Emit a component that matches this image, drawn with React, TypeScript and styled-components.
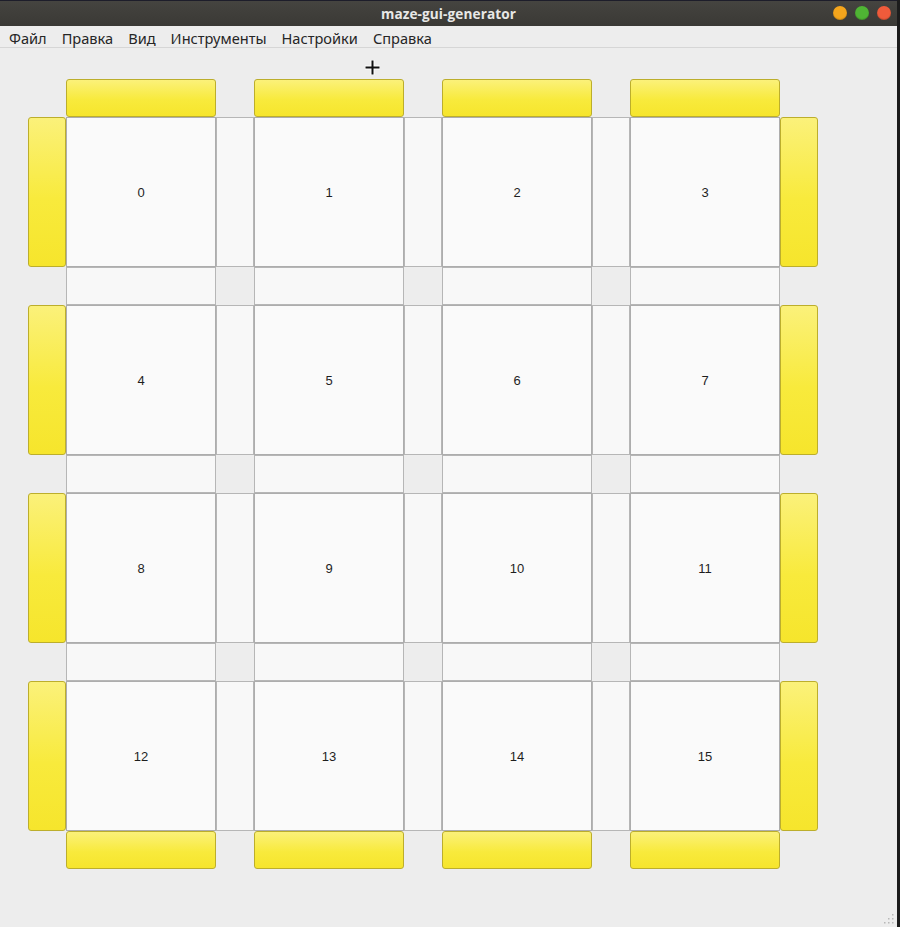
import React from "react";
import styled, { createGlobalStyle } from "styled-components";

const GlobalStyle = createGlobalStyle`
  html, body { margin: 0; padding: 0; background: #1c1c1c; }
  body { width: 900px; height: 927px; overflow: hidden; }
  * { box-sizing: border-box; }
`;

const Window = styled.div`
  position: relative;
  width: 897px;
  height: 927px;
  background: #ededed;
  display: flex;
  flex-direction: column;
  font-family: "Noto Sans", "Open Sans", "DejaVu Sans", sans-serif;
`;

const TitleBar = styled.div`
  height: 26px;
  flex: none;
  background: linear-gradient(#454440, #3a3935);
  border-top: 1px solid #1d1d2a;
  display: flex;
  align-items: center;
  justify-content: center;
  position: relative;
`;

const Title = styled.span`
  color: #e8e8e6;
  font-family: "Open Sans", "Noto Sans", sans-serif;
  font-weight: 700;
  font-size: 13.6px;
  letter-spacing: 0.1px;
`;

const Controls = styled.div`
  position: absolute;
  right: 6px;
  top: 5px;
  display: flex;
  gap: 8px;
`;

const Dot = styled.span<{ $c: string }>`
  width: 14px;
  height: 14px;
  border-radius: 50%;
  background: ${(p) => p.$c};
  box-shadow: inset 0 -1px 1px rgba(0, 0, 0, 0.2);
`;

const MenuBar = styled.nav`
  height: 22px;
  flex: none;
  display: flex;
  align-items: center;
  padding-left: 9px;
  gap: 15px;
  border-bottom: 1px solid #d6d6d6;
  font-size: 14.6px;
  color: #262626;
`;

const MenuItem = styled.span`
  line-height: 22px;
  padding-top: 2px;
`;

const Board = styled.div`
  display: grid;
  grid-template-columns: 38px 150px 38px 150px 38px 150px 38px 150px 38px;
  grid-template-rows: 38px 150px 38px 150px 38px 150px 38px 150px 38px;
  margin: 31px 0 0 28px;
  width: 790px;
`;

const Wall = styled.div`
  border: 1px solid #bcae2c;
  border-radius: 3px;
  background: linear-gradient(#fbf17a, #f8ea3c 55%, #f6e52c);
`;

const Passage = styled.div`
  border: 1px solid #b6b6b6;
  background: #f8f8f8;
`;

const Cell = styled.div`
  border: 1px solid #adadad;
  background: #fafafa;
  display: flex;
  align-items: center;
  justify-content: center;
  font-family: "Liberation Sans", Arial, sans-serif;
  font-size: 13px;
  color: #1e1e1e;
`;

const Empty = styled.div``;

const Cursor = styled.svg`
  position: absolute;
  left: 364px;
  top: 59px;
`;

const Grip = styled.svg`
  position: absolute;
  right: 2px;
  bottom: 2px;
`;

export default function App() {
  const items: React.ReactNode[] = [];
  for (let r = 0; r < 9; r++) {
    for (let c = 0; c < 9; c++) {
      const key = `${r}-${c}`;
      const outerR = r === 0 || r === 8;
      const outerC = c === 0 || c === 8;
      if (r % 2 === 0 && c % 2 === 0) {
        items.push(<Empty key={key} />);
      } else if (r % 2 === 0) {
        items.push(outerR ? <Wall key={key} /> : <Passage key={key} />);
      } else if (c % 2 === 0) {
        items.push(outerC ? <Wall key={key} /> : <Passage key={key} />);
      } else {
        const n = ((r - 1) / 2) * 4 + (c - 1) / 2;
        items.push(<Cell key={key}>{n}</Cell>);
      }
    }
  }
  return (
    <>
      <GlobalStyle />
      <Window>
        <TitleBar>
          <Title>maze-gui-generator</Title>
          <Controls>
            <Dot $c="#f4a51c" />
            <Dot $c="#4fb434" />
            <Dot $c="#ef5b3b" />
          </Controls>
        </TitleBar>
        <MenuBar>
          <MenuItem>Файл</MenuItem>
          <MenuItem>Правка</MenuItem>
          <MenuItem>Вид</MenuItem>
          <MenuItem>Инструменты</MenuItem>
          <MenuItem>Настройки</MenuItem>
          <MenuItem>Справка</MenuItem>
        </MenuBar>
        <Board>{items}</Board>
        <Cursor width="17" height="17" viewBox="0 0 17 17">
          <path d="M8.5 1v15M1 8.5h15" stroke="#fff" strokeWidth="4" />
          <path d="M8.5 1.5v14M1.5 8.5h14" stroke="#111" strokeWidth="2" />
        </Cursor>
        <Grip width="12" height="12" viewBox="0 0 12 12">
          {[
            [10, 2],
            [10, 6],
            [6, 6],
            [10, 10],
            [6, 10],
            [2, 10],
          ].map(([x, y]) => (
            <rect key={`${x}${y}`} x={x - 1} y={y - 1} width="1.5" height="1.5" fill="#b8b8b8" />
          ))}
        </Grip>
      </Window>
    </>
  );
}
